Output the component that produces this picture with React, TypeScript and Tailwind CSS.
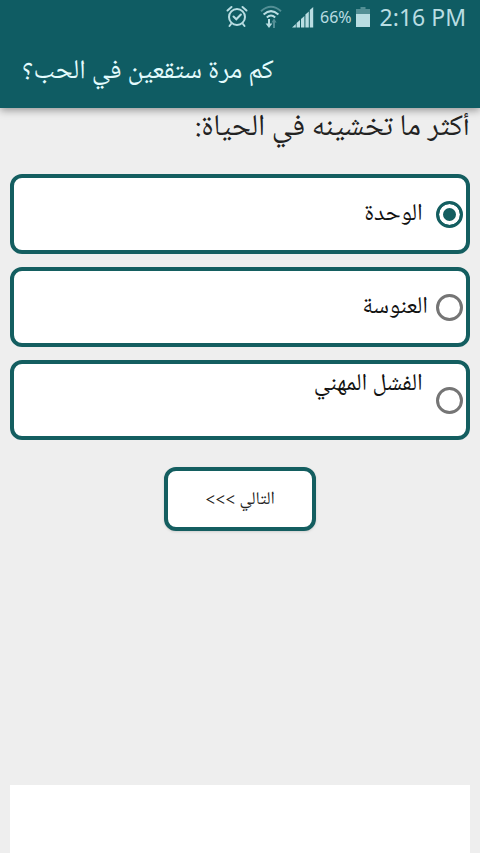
import { useState } from 'react';
import clsx from 'clsx';

// some answers come with their own leading space or trailing line break
const answers = [
  { id: 'loneliness', text: ' الوحدة' },
  { id: 'spinsterhood', text: 'العنوسة' },
  { id: 'career', text: ' الفشل المهني\n ' },
];

const AlarmIcon = () => (
  <svg width="22" height="24" viewBox="0 0 22 24" fill="none" stroke="currentColor" strokeWidth="2" strokeLinecap="round">
    <circle cx="11" cy="12" r="8" />
    <path d="M7.5 11.5 10.3 14.3l4.6-4.8" />
    <path d="M1.5 5.5 5.5 2M20.5 5.5l-4-3.5M5 19l-1.5 2M17 19l1.5 2" />
  </svg>
);

const WifiIcon = () => (
  <svg width="22" height="24" viewBox="0 0 22 24" fill="none" stroke="currentColor" strokeWidth="2">
    <path d="M1 6.2Q11-2.6 21 6.2" opacity=".4" />
    <path d="M3.6 9.4Q11 2.8 18.4 9.4" />
    <path d="M6.8 12.4Q11 8.6 15.2 12.4" />
    <path d="M9 14v6" />
    <path d="M5.6 18.5h6.8L9 23z" fill="currentColor" stroke="none" />
    <g opacity=".4">
      <path d="M14 17v6" />
      <path d="M11.4 17.5h5.2L14 13.5z" fill="currentColor" stroke="none" />
    </g>
  </svg>
);

const SignalIcon = () => (
  <svg width="22" height="22" viewBox="0 0 22 22" fill="currentColor">
    <path d="M0 21.5 3.8 18v3.5zM4.6 17l3.4-3v7.5H4.6zM9 13l3.4-3v11.5H9zM13.4 8.5l3.4-3v16h-3.4zM17.8 4l3.4-3v20.5h-3.4z" />
  </svg>
);

const BatteryIcon = () => (
  <svg width="14" height="22" viewBox="0 0 14 22" fill="currentColor">
    <path d="M4.5 1h5v2H14v5H0V3h4.5z" opacity=".4" />
    <path d="M0 8h14v13H0z" />
  </svg>
);

export default function App() {
  const [selected, setSelected] = useState('loneliness');

  return (
    <div dir="rtl" className="flex min-h-screen flex-col bg-[#eeeeee] font-['Noto_Naskh_Arabic_UI','Noto_Naskh_Arabic','DejaVu_Sans',sans-serif]">
      <header className="z-10 bg-[#0f5c63] shadow-[0_2px_8px_rgba(0,0,0,0.4)]">
        <div dir="ltr" className="flex h-9 items-center justify-end pr-3.5 pb-0.5 font-['Noto_Sans',sans-serif] text-[#b9dde2]">
          <AlarmIcon />
          <span className="ml-3"><WifiIcon /></span>
          <span className="ml-2.5"><SignalIcon /></span>
          <span className="ml-1.5 text-base">66%</span>
          <span className="ml-1"><BatteryIcon /></span>
          <span className="ml-2.5 text-[23px]">2:16 PM</span>
        </div>
        <h1 className="h-18 px-5.5 pt-4 text-left text-[27px] leading-10 text-[#e3fbfd]">كم مرة ستقعين في الحب؟</h1>
      </header>

      <main className="flex grow flex-col px-2.5">
        <form onSubmit={(e) => e.preventDefault()}>
          <fieldset>
            <legend className="h-16.5 text-3xl leading-10 text-[#222222]">أكثر ما تخشينه في الحياة:</legend>
            <div className="space-y-3.25">
              {answers.map((answer) => (
                <label
                  key={answer.id}
                  className="flex h-20 items-center gap-2 rounded-xl border-4 border-[#145e60] bg-white px-[3px]"
                >
                  <input
                    type="radio"
                    name="answer"
                    value={answer.id}
                    checked={selected === answer.id}
                    onChange={() => setSelected(answer.id)}
                    className={clsx(
                      'size-6.75 shrink-0 appearance-none rounded-full border-3',
                      selected === answer.id
                        ? 'border-[#145e60] bg-[#145e60] shadow-[inset_0_0_0_4px_#fff]'
                        : 'border-[#757575] bg-white'
                    )}
                  />
                  <span className="whitespace-pre text-2xl leading-8 text-[#111111]">{answer.text}</span>
                </label>
              ))}
            </div>
          </fieldset>
          <button
            type="submit"
            className="mx-auto mt-6.75 block h-16 w-38 rounded-xl border-4 border-[#145e60] bg-white text-lg text-[#222222] shadow-sm"
          >
            التالي &gt;&gt;&gt;
          </button>
        </form>
        <div className="mt-auto h-17 bg-white" />
      </main>
    </div>
  );
}
